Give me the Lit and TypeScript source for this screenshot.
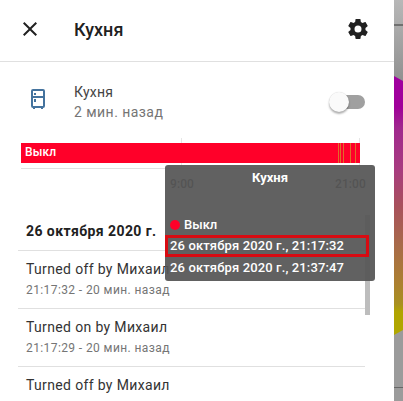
import { LitElement, html, css, svg } from "lit";
import { customElement } from "lit/decorators.js";

const CLOSE = "M19,6.41L17.59,5L12,10.59L6.41,5L5,6.41L10.59,12L5,17.59L6.41,19L12,13.41L17.59,19L19,17.59L13.41,12L19,6.41Z";
const COG = "M12,15.5A3.5,3.5 0 0,1 8.5,12A3.5,3.5 0 0,1 12,8.5A3.5,3.5 0 0,1 15.5,12A3.5,3.5 0 0,1 12,15.5M19.43,12.97C19.47,12.65 19.5,12.33 19.5,12C19.5,11.67 19.47,11.34 19.43,11L21.54,9.37C21.73,9.22 21.78,8.95 21.66,8.73L19.66,5.27C19.54,5.05 19.27,4.96 19.05,5.05L16.56,6.05C16.04,5.66 15.5,5.32 14.87,5.07L14.5,2.42C14.46,2.18 14.25,2 14,2H10C9.75,2 9.54,2.18 9.5,2.42L9.13,5.07C8.5,5.32 7.96,5.66 7.44,6.05L4.95,5.05C4.73,4.96 4.46,5.05 4.34,5.27L2.34,8.73C2.21,8.95 2.27,9.22 2.46,9.37L4.57,11C4.53,11.34 4.5,11.67 4.5,12C4.5,12.33 4.53,12.65 4.57,12.97L2.46,14.63C2.27,14.78 2.21,15.05 2.34,15.27L4.34,18.73C4.46,18.95 4.73,19.03 4.95,18.95L7.44,17.94C7.96,18.34 8.5,18.68 9.13,18.93L9.5,21.58C9.54,21.82 9.75,22 10,22H14C14.25,22 14.46,21.82 14.5,21.58L14.87,18.93C15.5,18.67 16.04,18.34 16.56,17.94L19.05,18.95C19.27,19.03 19.54,18.95 19.66,18.73L21.66,15.27C21.78,15.05 21.73,14.78 21.54,14.63L19.43,12.97Z";
const FRIDGE = "M9,21V22H7V21A2,2 0 0,1 5,19V4A2,2 0 0,1 7,2H17A2,2 0 0,1 19,4V19A2,2 0 0,1 17,21V22H15V21H9M7,4V9H17V4H7M7,19H17V11H7V19M8,12H10V15H8V12M8,6H10V8H8V6Z";

const icon = (d: string) => html`<svg class="ic" viewBox="0 0 24 24" width="24" height="24">${svg`<path d=${d}></path>`}</svg>`;

const EVENTS = [
  { t: "Turned off by Михаил", s: "21:17:32 - 20 мин. назад" },
  { t: "Turned on by Михаил", s: "21:17:29 - 20 мин. назад" },
  { t: "Turned off by Михаил", s: "" },
];

const STRIPES = [
  { x: 317, w: 1 },
  { x: 319, w: 1 },
  { x: 322, w: 1 },
  { x: 329, w: 1 },
  { x: 334, w: 1 },
];

@customElement("app-root")
export class AppRoot extends LitElement {
  static styles = css`
    :host { display: flex; width: 403px; height: 401px; overflow: hidden; font-family: Roboto, sans-serif; color: #212121; background: #fff; position: relative; }
    .panel { width: 394px; flex: none; display: flex; flex-direction: column; background: #fff; }
    .backdrop { flex: 1; display: block; width: 9px; height: 401px; }
    .ic { fill: currentColor; display: block; }
    header { height: 58px; flex: none; border-bottom: 1px solid #e0e0e0; display: flex; align-items: center; padding: 0 24px 3px 18px; }
    .title { font-size: 18px; font-weight: 500; margin-left: 32px; flex: 1; }
    .state { height: 74px; flex: none; display: flex; align-items: center; padding: 0 29px 0 26px; box-sizing: border-box; }
    .state .ic { color: #44739e; }
    .st-text { margin-left: 24px; flex: 1; display: flex; flex-direction: column; gap: 1px; padding-top: 6px; }
    .st-name { font-size: 14px; letter-spacing: .25px; color: #444; line-height: 18px; }
    .st-sub { font-size: 14px; letter-spacing: .45px; color: #757575; line-height: 20px; }
    .switch { width: 26px; height: 14px; position: relative; margin-top: 6px; background: #a0a0a0; border-radius: 7px; }
    .thumb { position: absolute; left: -10px; top: -3px; width: 20px; height: 20px; border-radius: 50%; background: #fafafa; box-shadow: 0 2px 2px rgba(0,0,0,.3), 0 0 1px rgba(0,0,0,.2); }
    .chart { position: relative; height: 73px; flex: none; margin: 0 34px 0 21px; }
    .tick { position: absolute; top: 2px; width: 1px; height: 31px; background: #e6e6e6; }
    .bar { position: absolute; top: 7px; left: 0; right: 0; height: 20px; background: #ff0029; color: #fff; font-size: 12px; font-weight: 500; letter-spacing: .1px; line-height: 19px; padding-left: 4px; box-sizing: border-box; }
    .bar i { position: absolute; top: 0; height: 20px; background: #d9802a; opacity: .85; }
    .axis { position: absolute; top: 32px; left: 0; right: 0; border-top: 1px solid #e0e0e0; }
    .axis-lbl { position: absolute; top: 41px; font-size: 12px; font-weight: 500; letter-spacing: .1px; color: #444; }
    .list { flex: 1; min-height: 0; overflow: hidden; padding: 0 29px 0 18px; }
    .day { padding: 0 0 11px 8px; border-bottom: 1px solid #e0e0e0; font-size: 14px; font-weight: 700; letter-spacing: .42px; display: flex; align-items: flex-end; height: 30px; }
    .event { border-bottom: 1px solid #e0e0e0; padding: 9px 0 0 8px; height: 48px; }
    .e-t { font-size: 14px; letter-spacing: .35px; color: #333; line-height: 18px; }
    .e-s { font-size: 12px; letter-spacing: .4px; color: #757575; line-height: 16px; margin-top: 4px; }
    .scroll { position: absolute; left: 365px; top: 215px; width: 5px; height: 100px; background: #bdbdbd; }
    .tip { position: absolute; left: 165px; top: 165px; width: 210px; height: 116px; background: rgba(85,85,85,.93); border-radius: 3px; color: #fff; font-size: 13px; font-weight: 500; display: flex; flex-direction: column; padding: 5px 0 0 5px; box-sizing: border-box; }
    .tip-title { text-align: center; font-size: 13px; font-weight: 700; line-height: 16px; padding-right: 5px; }
    .tip-row { display: flex; align-items: center; gap: 4px; margin-top: 29px; line-height: 20px; height: 20px; }
    .dot { width: 10px; height: 10px; border-radius: 50%; background: #ff0029; }
    .tip-line { line-height: 16px; letter-spacing: .13px; }
    .hl { margin: 0 0 0 -5px; width: 204px; height: 22px; box-sizing: border-box; border: 3px solid #d80b12; padding-left: 2px; display: flex; align-items: center; }
    .tip-line.last { margin-top: 3px; }
  `;

  render() {
    return html`
      <div class="panel">
        <header>
          ${icon(CLOSE)}
          <div class="title">Кухня</div>
          ${icon(COG)}
        </header>
        <div class="state">
          ${icon(FRIDGE)}
          <div class="st-text">
            <div class="st-name">Кухня</div>
            <div class="st-sub">2 мин. назад</div>
          </div>
          <div class="switch"><div class="thumb"></div></div>
        </div>
        <div class="chart">
          <div class="tick" style="left:160px"></div>
          <div class="tick" style="left:338px"></div>
          <div class="axis-lbl" style="left:149px">9:00</div>
          <div class="axis-lbl" style="left:314px">21:00</div>
          <div class="bar">
            Выкл
            ${STRIPES.map((s) => html`<i style="left:${s.x}px;width:${s.w}px"></i>`)}
          </div>
          <div class="axis"></div>
        </div>
        <div class="list">
          <div class="day">26 октября 2020 г.</div>
          ${EVENTS.map((e) => html`
            <div class="event">
              <div class="e-t">${e.t}</div>
              ${e.s ? html`<div class="e-s">${e.s}</div>` : ""}
            </div>`)}
        </div>
      </div>
      <svg class="backdrop" viewBox="0 0 9 401" preserveAspectRatio="none">
        <defs>
          <linearGradient id="g1" x1="0" y1="0" x2="0" y2="1">
            <stop offset="0" stop-color="#b8b8b8"></stop>
            <stop offset="1" stop-color="#8e8e8e"></stop>
          </linearGradient>
          <linearGradient id="g2" gradientUnits="userSpaceOnUse" x1="0" y1="76" x2="0" y2="335">
            <stop offset="0" stop-color="#a000a0"></stop>
            <stop offset=".12" stop-color="#a0009a"></stop>
            <stop offset=".2" stop-color="#a0288e"></stop>
            <stop offset=".36" stop-color="#a83c80"></stop>
            <stop offset=".5" stop-color="#a8505c"></stop>
            <stop offset=".65" stop-color="#a86a4a"></stop>
            <stop offset=".8" stop-color="#ac8030"></stop>
            <stop offset=".88" stop-color="#a89020"></stop>
            <stop offset=".91" stop-color="#b0a400"></stop>
            <stop offset="1" stop-color="#b0a800"></stop>
          </linearGradient>
        </defs>
        <rect x="0" y="0" width="9" height="85" fill="url(#g1)"></rect>
        <rect x="0" y="24" width="9" height="2" fill="#707070"></rect>
        <rect x="0" y="328" width="9" height="73" fill="#9b9b9b"></rect>
        <rect x="0" y="387" width="9" height="1" fill="#666"></rect>
        <polygon points="0,76 9,81 9,330 0,335" fill="url(#g2)"></polygon>
      </svg>
      <div class="scroll"></div>
      <div class="tip">
        <div class="tip-title">Кухня</div>
        <div class="tip-row"><span class="dot"></span><span>Выкл</span></div>
        <div class="hl"><span class="tip-line">26 октября 2020 г., 21:17:32</span></div>
        <div class="tip-line last">26 октября 2020 г., 21:37:47</div>
      </div>
    `;
  }
}
